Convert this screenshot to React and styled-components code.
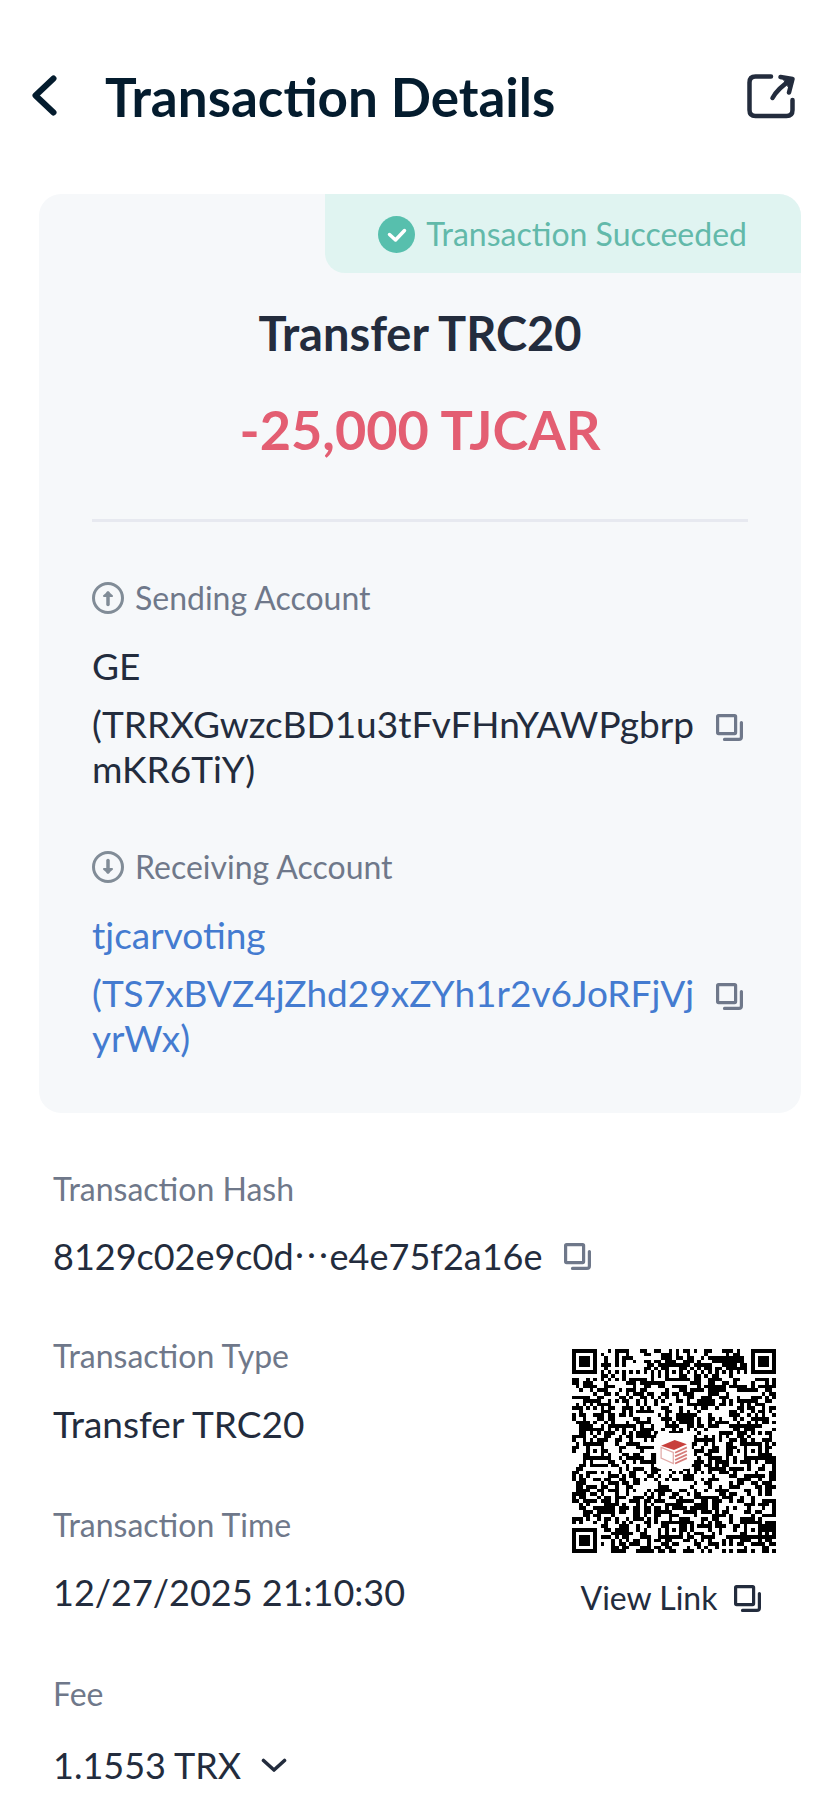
import React from "react";
import styled, { createGlobalStyle } from "styled-components";

const color = {
  title: "#041c2e",
  ink: "#232c3d",
  muted: "#6f788a",
  iconMuted: "#818c97",
  red: "#e35e72",
  blue: "#447bd0",
  green: "#57bfad",
  greenText: "#62b9aa",
  greenSoft: "#e0f4f1",
  card: "#f6f8fa",
  line: "#e7e9f0",
};

const GlobalStyle = createGlobalStyle`
  * { box-sizing: border-box; }
  body {
    margin: 0;
    background: #fff;
    color: ${color.ink};
    font-family: Lato, "Noto Sans", sans-serif;
  }
  h1, h2, p { margin: 0; }
  button {
    padding: 0;
    border: 0;
    background: none;
    color: inherit;
    font: inherit;
    cursor: pointer;
  }
  a { color: inherit; text-decoration: none; }
  svg { display: block; flex: none; }
`;

const Page = styled.main`
  min-height: 100vh;
  padding: 64px 39px 20px;
`;

const Header = styled.header`
  display: flex;
  align-items: center;
  margin: 0 6px 64px -9px;
`;

const Title = styled.h1`
  flex: 1;
  padding-left: 47px;
  color: ${color.title};
  font-size: 53px;
  font-weight: 700;
  line-height: 66px;
`;

const IconButton = styled.button`
  display: flex;
  flex: none;
  color: ${(p) => p.$tone || color.muted};
`;

const Card = styled.section`
  display: flex;
  flex-direction: column;
  overflow: hidden;
  border-radius: 22px;
  background: ${color.card};
`;

const Badge = styled.p`
  display: flex;
  align-items: center;
  align-self: flex-end;
  gap: 11px;
  padding: 20px 54px 19px 53px;
  border-bottom-left-radius: 20px;
  background: ${color.greenSoft};
  color: ${color.greenText};
  font-size: 32px;
  line-height: 40px;
`;

const Summary = styled.div`
  display: flex;
  flex-direction: column;
  gap: 35px;
  margin: 31px 53px 0;
  padding-bottom: 56px;
  border-bottom: 3px solid ${color.line};
  text-align: center;
`;

const Kind = styled.h2`
  font-size: 47px;
  font-weight: 700;
  line-height: 58px;
`;

const Amount = styled.p`
  color: ${color.red};
  font-size: 54px;
  font-weight: 700;
  line-height: 66px;
`;

const Accounts = styled.div`
  display: flex;
  flex-direction: column;
  gap: 56px;
  padding: 56px 58px 53px 53px;
`;

const Label = styled.p`
  display: flex;
  align-items: center;
  gap: 11px;
  margin-bottom: 25px;
  color: ${color.muted};
  font-size: 32px;
  line-height: 40px;
`;

const Value = styled.p`
  display: flex;
  align-items: center;
  gap: 22px;
  color: ${(p) => p.$tone || color.ink};
  font-size: ${(p) => (p.$numeric ? 36 : 37)}px;
  line-height: 45px;
`;

const AddressRow = styled.div`
  display: flex;
  align-items: flex-start;
  justify-content: space-between;
  gap: 16px;
  margin-top: 13px;

  button { margin-top: 13px; }
`;

const Address = styled.p`
  flex: 1;
  color: ${(p) => p.$tone || color.ink};
  font-size: 37px;
  line-height: 45px;
  word-break: break-all;
`;

const Details = styled.section`
  display: flex;
  flex-direction: column;
  gap: 57px;
  padding: 56px 25px 0 14px;
`;

const Split = styled.div`
  display: flex;
  align-items: flex-start;
  justify-content: space-between;
`;

const Fields = styled.div`
  display: flex;
  flex-direction: column;
  gap: 59px;
`;

const Ellipsis = styled.span`
  font-family: "Noto Sans CJK JP", sans-serif;
  line-height: 0;
`;

const QrPanel = styled.aside`
  display: flex;
  flex-direction: column;
  align-items: center;
  gap: 25px;
  padding-top: 13px;
`;

const LinkButton = styled.button`
  display: flex;
  align-items: center;
  gap: 17px;
  padding-right: 6px;
  font-size: 32px;
  line-height: 40px;
`;

const FeeButton = styled.button`
  display: flex;
  align-items: center;
  gap: 20px;
  padding: 4px 0;
  font-size: 36px;
  line-height: 45px;
`;

const BackIcon = () => (
  <svg width="28" height="44" viewBox="0 0 28 44" fill="none" stroke="currentColor" strokeWidth="6" strokeLinecap="round" strokeLinejoin="round">
    <path d="M23.500 3.500 5.500 20.500l18 17" />
  </svg>
);

const OpenIcon = () => (
  <svg width="48" height="46" viewBox="0 0 48 46" fill="none" stroke="currentColor" strokeWidth="4.500" strokeLinecap="round" strokeLinejoin="round">
    <path d="M24 2.500H8.500Q2.500 2.500 2.500 8.500V36q0 6 6 6h31q6 0 6-6V26" />
    <path d="M25.500 24Q31 14 44 6" />
    <path d="M33.500 3 45.500 5 42 18.500" />
    <path d="M36 4.500 45 5.500 42.500 14.500Z" fill="currentColor" strokeWidth="1" />
  </svg>
);

const CheckIcon = () => (
  <svg width="37" height="37" viewBox="0 0 37 37">
    <circle cx="18.500" cy="18.500" r="18.500" fill={color.green} />
    <path d="m11.500 18.500 6 5.500 9-9.500" fill="none" stroke="#fff" strokeWidth="3.500" strokeLinecap="round" strokeLinejoin="round" />
  </svg>
);

const DirectionIcon = ({ down }) => (
  <svg width="32" height="32" viewBox="0 0 32 32" fill="none" stroke={color.iconMuted} strokeWidth="3" strokeLinecap="round" strokeLinejoin="round">
    <circle cx="16" cy="16" r="14.500" />
    <g transform={down ? "rotate(180 16 16)" : undefined}>
      <path d="M16 22.500V11" strokeWidth="3.500" />
      <path d="M12 14l4-3.600 4 3.600Z" fill={color.iconMuted} strokeWidth="2" />
    </g>
  </svg>
);

const CopyIcon = () => (
  <svg width="27" height="27" viewBox="0 0 27 27" fill="none" stroke="currentColor" strokeWidth="3.200" strokeLinecap="round" strokeLinejoin="round">
    <rect x="1.600" y="1.600" width="18" height="18" rx="1" />
    <path d="M25.400 8.500V22.900q0 2.500-2.500 2.500H8.500" />
  </svg>
);

const ChevronIcon = () => (
  <svg width="26" height="16" viewBox="0 0 26 16" fill="none" stroke="currentColor" strokeWidth="3.600" strokeLinecap="round" strokeLinejoin="round">
    <path d="m2.500 2.500 10.500 9.500L23.500 2.500" />
  </svg>
);

const QR_SIZE = 57;
const ALIGN_CENTERS = [6, 28, 50];

const ringModule = (dx, dy, solid) => {
  const d = Math.max(Math.abs(dx), Math.abs(dy));
  return solid ? d <= 1 || d === 3 : d === 0 || d === 2;
};

// Fixed patterns of a version 10 code; returns undefined for data modules.
const fixedModule = (x, y) => {
  const last = QR_SIZE - 1;
  for (const [cx, cy] of [[3, 3], [last - 3, 3], [3, last - 3]]) {
    const dx = x - cx;
    const dy = y - cy;
    if (Math.abs(dx) <= 4 && Math.abs(dy) <= 4) return ringModule(dx, dy, true);
  }
  for (const cx of ALIGN_CENTERS) {
    for (const cy of ALIGN_CENTERS) {
      const overlapsFinder =
        (cx === 6 && cy !== 28) || (cy === 6 && cx !== 28);
      if (!overlapsFinder && Math.abs(x - cx) <= 2 && Math.abs(y - cy) <= 2) {
        return ringModule(x - cx, y - cy, false);
      }
    }
  }
  if (x === 6) return y % 2 === 0;
  if (y === 6) return x % 2 === 0;
  return undefined;
};

const buildQrPath = () => {
  let seed = 8129;
  let path = "";
  for (let y = 0; y < QR_SIZE; y += 1) {
    for (let x = 0; x < QR_SIZE; x += 1) {
      seed = (Math.imul(seed, 1664525) + 1013904223) >>> 0;
      const fixed = fixedModule(x, y);
      const dark = fixed === undefined ? seed / 4294967296 < 0.52 : fixed;
      if (dark) path += `M${x} ${y}h1v1h-1z`;
    }
  }
  return path;
};

const qrPath = buildQrPath();

const QrCode = () => (
  <svg width="204" height="204" viewBox="0 0 57 57" role="img" aria-label="QR code of the transaction link">
    <path d={qrPath} fill="#000" shapeRendering="crispEdges" />
    <rect x="23.500" y="23.500" width="10" height="10" rx="1" fill="#fff" />
    <g transform="translate(24.900 25.400)">
      <path d="M0 1.600 3.800 0 7.200 1.200 3.600 2.800Z" fill="#c8403c" />
      <path d="M0 2.100 3.400 3.500V6.600L0 5.100Z" fill="#fff" stroke="#e2aaa8" strokeWidth=".35" />
      <path d="M3.900 3.600 7.200 2.100M3.900 4.600 7.200 3.100M3.900 5.600 7.200 4.100M3.900 6.600 7.200 5.100" stroke="#d67c79" strokeWidth=".5" />
    </g>
  </svg>
);

const CopyButton = ({ label }) => (
  <IconButton type="button" aria-label={label}>
    <CopyIcon />
  </IconButton>
);

const Account = ({ label, name, address, tone, down }) => {
  const fullAddress = `(${address})`;
  return (
    <div>
      <Label>
        <DirectionIcon down={down} />
        {label}
      </Label>
      <Value $tone={tone}>{tone ? <a href="#account">{name}</a> : name}</Value>
      <AddressRow>
        <Address $tone={tone}>{tone ? <a href="#account">{fullAddress}</a> : fullAddress}</Address>
        <CopyButton label={`Copy ${label} address`} />
      </AddressRow>
    </div>
  );
};

const Field = ({ label, children }) => (
  <div>
    <Label>{label}</Label>
    {children}
  </div>
);

export default function App() {
  return (
    <>
      <GlobalStyle />
      <Page>
        <Header>
          <IconButton type="button" aria-label="Back" $tone={color.title}>
            <BackIcon />
          </IconButton>
          <Title>Transaction Details</Title>
          <IconButton type="button" aria-label="Open in explorer" $tone={color.ink}>
            <OpenIcon />
          </IconButton>
        </Header>

        <Card>
          <Badge>
            <CheckIcon />
            Transaction Succeeded
          </Badge>
          <Summary>
            <Kind>Transfer TRC20</Kind>
            <Amount>-25,000 TJCAR</Amount>
          </Summary>
          <Accounts>
            <Account label="Sending Account" name="GE" address="TRRXGwzcBD1u3tFvFHnYAWPgbrpmKR6TiY" />
            <Account
              label="Receiving Account"
              name="tjcarvoting"
              address="TS7xBVZ4jZhd29xZYh1r2v6JoRFjVjyrWx"
              tone={color.blue}
              down
            />
          </Accounts>
        </Card>

        <Details>
          <Field label="Transaction Hash">
            <Value $numeric>
              <span>
                8129c02e9c0d<Ellipsis lang="ja">…</Ellipsis>e4e75f2a16e
              </span>
              <CopyButton label="Copy transaction hash" />
            </Value>
          </Field>
          <Split>
            <Fields>
              <Field label="Transaction Type">
                <Value>Transfer TRC20</Value>
              </Field>
              <Field label="Transaction Time">
                <Value $numeric>12/27/2025 21:10:30</Value>
              </Field>
              <Field label="Fee">
                <FeeButton type="button" aria-expanded="false">
                  1.1553 TRX
                  <ChevronIcon />
                </FeeButton>
              </Field>
            </Fields>
            <QrPanel>
              <QrCode />
              <LinkButton type="button">
                View Link
                <CopyIcon />
              </LinkButton>
            </QrPanel>
          </Split>
        </Details>
      </Page>
    </>
  );
}
